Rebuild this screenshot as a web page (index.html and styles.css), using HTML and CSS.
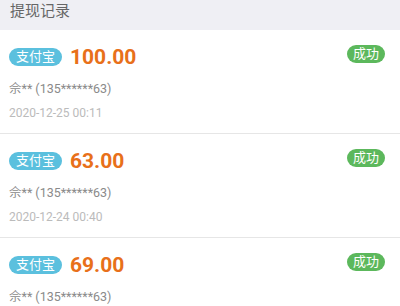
FILE: index.html
```html
<!DOCTYPE html>
<html lang="zh-CN">
<head>
    <meta charset="UTF-8">
    <meta name="viewport" content="width=device-width, initial-scale=1.0">
    <title>提现记录</title>
    <link rel="stylesheet" href="styles.css">
</head>
<body>
    <div class="page-title">提现记录</div>

    <div class="record-list">
        <div class="record">
            <div class="record-top">
                <div class="record-main">
                    <span class="pay-badge">支付宝</span>
                    <span class="amount">100.00</span>
                </div>
                <span class="status-badge">成功</span>
            </div>
            <div class="record-name">佘** (135******63)</div>
            <div class="record-date">2020-12-25 00:11</div>
        </div>

        <div class="record">
            <div class="record-top">
                <div class="record-main">
                    <span class="pay-badge">支付宝</span>
                    <span class="amount">63.00</span>
                </div>
                <span class="status-badge">成功</span>
            </div>
            <div class="record-name">佘** (135******63)</div>
            <div class="record-date">2020-12-24 00:40</div>
        </div>

        <div class="record">
            <div class="record-top">
                <div class="record-main">
                    <span class="pay-badge">支付宝</span>
                    <span class="amount">69.00</span>
                </div>
                <span class="status-badge">成功</span>
            </div>
            <div class="record-name">佘** (135******63)</div>
            <div class="record-date">2020-12-23 21:15</div>
        </div>
    </div>
</body>
</html>
```

FILE: styles.css
```css
body {
    font-family: Roboto, "Noto Sans CJK SC", sans-serif;
    margin: 0;
    padding: 0;
    background-color: #fff;
    overflow: hidden;
}
.page-title {
    height: 30px;
    line-height: 22px;
    padding-left: 10px;
    font-size: 15px;
    color: #666;
    background-color: #efeff4;
}
.record {
    height: 89px; /* 103px with padding */
    padding: 14px 15px 0 9px;
    border-bottom: 1px solid #e6e6e6;
}
.record-top {
    display: flex;
    justify-content: space-between;
    align-items: flex-start;
}
.record-main {
    display: flex;
    align-items: center;
    height: 26px;
}
.pay-badge {
    height: 18px;
    line-height: 18px;
    padding: 0 7px;
    font-size: 13px;
    color: #fff;
    background-color: #5bc0de;
    border-radius: 9px;
}
.amount {
    margin-left: 8px;
    font-size: 21px;
    font-weight: bold;
    color: #e8701a;
}
.status-badge {
    margin-top: 1px;
    height: 18px;
    line-height: 18px;
    padding: 0 6px;
    font-size: 13px;
    color: #fff;
    background-color: #5cb85c;
    border-radius: 9px;
}
.record-name {
    margin-top: 9px;
    line-height: 20px;
    font-size: 12.5px;
    color: #8a8a8a;
}
.record-date {
    margin-top: 5px;
    line-height: 18px;
    font-size: 12px;
    color: #bbb;
}
```
